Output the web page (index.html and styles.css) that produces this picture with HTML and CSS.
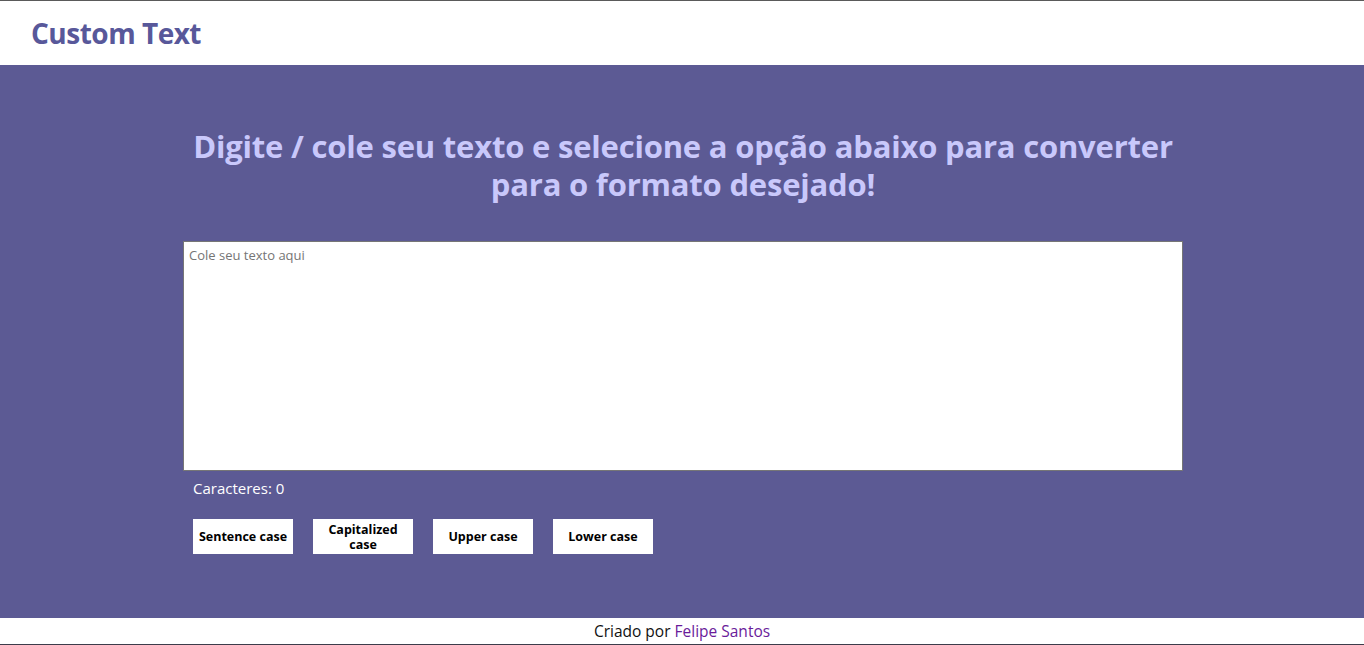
FILE: index.html
```html
<!DOCTYPE html>
<html lang="pt-BR">
<head>
<meta charset="utf-8">
<title>Custom Text</title>
<link rel="stylesheet" href="styles.css">
</head>
<body>
<div class="page">
  <header class="topbar">
    <h1 class="brand">Custom Text</h1>
  </header>
  <main class="main">
    <h2 class="headline">Digite / cole seu texto e selecione a opção abaixo para converter<br>para o formato desejado!</h2>
    <div class="editor">
      <textarea class="input" placeholder="Cole seu texto aqui"></textarea>
      <p class="counter">Caracteres: 0</p>
      <div class="actions">
        <button class="btn">Sentence case</button>
        <button class="btn">Capitalized case</button>
        <button class="btn">Upper case</button>
        <button class="btn">Lower case</button>
      </div>
    </div>
  </main>
  <footer class="footer">Criado por <a class="author" href="#">Felipe Santos</a></footer>
</div>
</body>
</html>
```
FILE: styles.css
```css
* { box-sizing: border-box; }
html, body { margin: 0; padding: 0; }
body {
  font-family: "Open Sans", "DejaVu Sans", sans-serif;
  background: #fff;
}
.page {
  height: 645px;
  display: flex;
  flex-direction: column;
  border-top: 1px solid #5a5a5a;
  border-bottom: 1px solid #3c3c4a;
}
.topbar {
  height: 64px;
  flex: none;
  display: flex;
  align-items: center;
  padding-left: 31px;
  background: #fff;
}
.brand {
  margin: 0;
  font-size: 28px;
  font-weight: 700;
  color: #58589a;
  letter-spacing: -0.5px;
}
.main {
  flex: 1;
  background: #5c5a94;
  display: flex;
  flex-direction: column;
  align-items: center;
  padding-top: 62px;
  padding-left: 2px;
}
.headline {
  margin: 0;
  text-align: center;
  font-size: 31px;
  line-height: 38px;
  font-weight: 700;
  color: #c9c8fb;
  letter-spacing: -0.2px;
}
.editor {
  width: 1000px;
  margin-top: 38px;
}
.input {
  display: block;
  width: 1000px;
  height: 230px;
  border: 1px solid #767676;
  padding: 4px 5px;
  resize: none;
  font-family: "Open Sans", sans-serif;
  font-size: 13px;
  color: #333;
  background: #fff;
}
.input::placeholder { color: #757575; }
.counter {
  margin: 7px 0 0 10px;
  font-size: 15px;
  line-height: 20px;
  color: #fff;
}
.actions {
  display: flex;
  gap: 20px;
  margin: 21px 0 0 10px;
}
.btn {
  width: 100px;
  height: 35px;
  border: none;
  background: #fff;
  font-family: "Open Sans", sans-serif;
  font-weight: 700;
  font-size: 12.5px;
  line-height: 15px;
  color: #000;
  padding: 0 4px;
}
.footer {
  height: 26px;
  flex: none;
  text-align: center;
  font-size: 15.5px;
  line-height: 26px;
  color: #111;
  background: #fff;
}
.author {
  color: #6a1b9a;
  text-decoration: none;
}
```
